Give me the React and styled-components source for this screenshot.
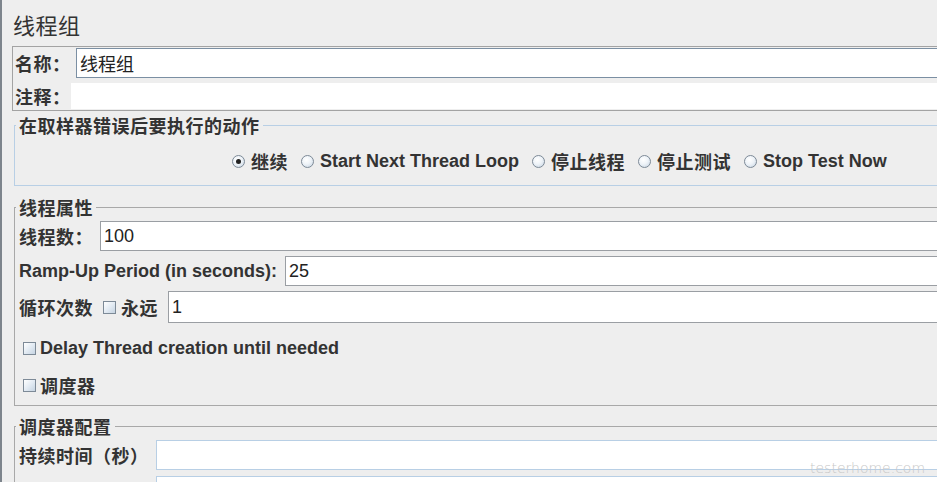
import React from 'react';
import styled, { createGlobalStyle } from 'styled-components';

const GlobalStyle = createGlobalStyle`
    html, body {
        margin:0;
        padding:0;
        background:#eeeeee;
        overflow:hidden;
    }
    body {
        font-family:"Liberation Sans", "Noto Sans CJK SC", sans-serif;
        color:#333333;
    }
`;

const Page = styled.div`
    position:relative;
    width:960px;
    height:482px;
    border-left:2px solid #7d848c;
    padding-left:10px;
    box-sizing:border-box;
    display:flex;
    flex-direction:column;
    & > * { flex:none; }
`;

const Title = styled.h1`
    margin:12px 0 10px 1px;
    font-size:22px;
    line-height:24px;
    font-weight:normal;
    letter-spacing:0.5px;
    font-family:"Noto Sans CJK SC", sans-serif;
`;

const NameBox = styled.div`
    border:1px solid #a3a3a3;
    border-right:none;
    height:62px;
    display:flex;
    flex-direction:column;
    gap:5px;
    padding-top:1px;
`;

const Row = styled.div`
    display:flex;
    align-items:center;
    flex:none;
    height:${props => props.h || 30}px;
    margin-top:${props => props.mt || 0}px;
`;

const Label = styled.span`
    flex:none;
    width:${props => props.w ? `${props.w}px` : 'auto'};
    padding-left:${props => props.pl || 0}px;
    margin-right:${props => props.mr || 0}px;
    box-sizing:border-box;
    font-size:18px;
    font-weight:${props => props.cjk ? 600 : 'bold'};
    font-family:${props => props.cjk ? '"Noto Sans CJK SC", sans-serif' : '"Liberation Sans", sans-serif'};
    white-space:nowrap;
    letter-spacing:${props => props.cjk ? '0.5px' : '0'};
`;

const Input = styled.div`
    flex:1;
    height:100%;
    box-sizing:border-box;
    background:#ffffff;
    border:1px solid ${props => props.tone === 'focus' ? '#7b8fa3' : props.tone === 'light' ? '#b8cfe5' : props.tone === 'none' ? '#ffffff' : '#9a9ea3'};
    border-right:none;
    display:flex;
    align-items:center;
    padding-left:3px;
    font-size:18px;
    font-family:${props => props.cjk ? '"Noto Sans CJK SC", sans-serif' : '"Liberation Sans", sans-serif'};
    color:#222;
`;

const Group = styled.fieldset`
    flex:none;
    margin:${props => props.mt || 0}px 0 0 2px;
    padding:${props => props.pad || '0 0 0 4px'};
    border:1px solid ${props => props.blue ? '#b8cfe5' : '#a8a8a8'};
    border-right:none;
    ${props => props.open ? 'border-bottom:none;' : ''}
    min-width:0;
    display:flex;
    flex-direction:column;
    gap:5px;
    height:${props => props.h ? `${props.h}px` : 'auto'};
    box-sizing:border-box;
`;

const Legend = styled.legend`
    margin-left:-3px;
    padding:0 3px;
    font-size:18px;
    line-height:20px;
    font-weight:600;
    letter-spacing:0.5px;
    font-family:"Noto Sans CJK SC", sans-serif;
`;

const RadioRow = styled.div`
    display:flex;
    align-items:center;
    gap:13px;
    padding:15px 0 0 213px;
    height:22px;
`;

const Option = styled.label`
    display:flex;
    align-items:center;
    gap:6px;
    white-space:nowrap;
`;

const Radio = styled.span`
    position:relative;
    width:11px;
    height:11px;
    border-radius:50%;
    border:1px solid #7d8a97;
    background:radial-gradient(circle at 40% 35%, #ffffff 0%, #eef3f8 45%, #c4d2e0 100%);
    flex:none;
    &::after {
        content:'';
        display:${props => props.checked ? 'block' : 'none'};
        position:absolute;
        left:3px;
        top:3px;
        width:5px;
        height:5px;
        border-radius:50%;
        background:#222;
    }
`;

const Check = styled.span`
    width:11px;
    height:11px;
    border:1px solid #7d8a97;
    background:linear-gradient(135deg, #ffffff 0%, #e3ebf3 50%, #c6d4e2 100%);
    flex:none;
    margin:${props => props.m || '0'};
`;

const Watermark = styled.div`
    position:absolute;
    left:808px;
    top:460px;
    font-family:"DejaVu Sans", sans-serif;
    font-size:14px;
    font-weight:200;
    color:#c8c8c8;
`;

const App = () => (
    <>
        <GlobalStyle />
        <Page>
            <Title>线程组</Title>
            <NameBox>
                <Row h={30}>
                    <Label cjk w={63} pl={2}>名称：</Label>
                    <Input tone="focus" cjk>线程组</Input>
                </Row>
                <Row h={26}>
                    <Label cjk w={58} pl={2}>注释：</Label>
                    <Input tone="none" />
                </Row>
            </NameBox>

            <Group blue mt={4} h={71}>
                <Legend>在取样器错误后要执行的动作</Legend>
                <RadioRow>
                    <Option><Radio checked /><Label cjk>继续</Label></Option>
                    <Option><Radio /><Label>Start Next Thread Loop</Label></Option>
                    <Option><Radio /><Label cjk>停止线程</Label></Option>
                    <Option><Radio /><Label cjk>停止测试</Label></Option>
                    <Option><Radio /><Label>Stop Test Now</Label></Option>
                </RadioRow>
            </Group>

            <Group mt={11} h={209} pad="4px 0 0 4px">
                <Legend>线程属性</Legend>
                <Row h={30}>
                    <Label cjk w={81}>线程数：</Label>
                    <Input>100</Input>
                </Row>
                <Row h={30}>
                    <Label mr={8}>Ramp-Up Period (in seconds):</Label>
                    <Input>25</Input>
                </Row>
                <Row h={32}>
                    <Label cjk mr={10}>循环次数</Label>
                    <Check m="0 5px 0 0" />
                    <Label cjk mr={10}>永远</Label>
                    <Input>1</Input>
                </Row>
                <Row h={20} mt={10}>
                    <Check m="0 4px 0 4px" />
                    <Label>Delay Thread creation until needed</Label>
                </Row>
                <Row h={20} mt={12}>
                    <Check m="0 4px 0 4px" />
                    <Label cjk>调度器</Label>
                </Row>
            </Group>

            <Group mt={10} open pad="4px 0 0 4px" h={80}>
                <Legend>调度器配置</Legend>
                <Row h={30}>
                    <Label cjk w={137}>持续时间（秒）</Label>
                    <Input tone="light" />
                </Row>
                <Row h={30} mt={1}>
                    <Label cjk w={137}></Label>
                    <Input tone="light" />
                </Row>
            </Group>

            <Watermark>testerhome.com</Watermark>
        </Page>
    </>
);

export default App;
